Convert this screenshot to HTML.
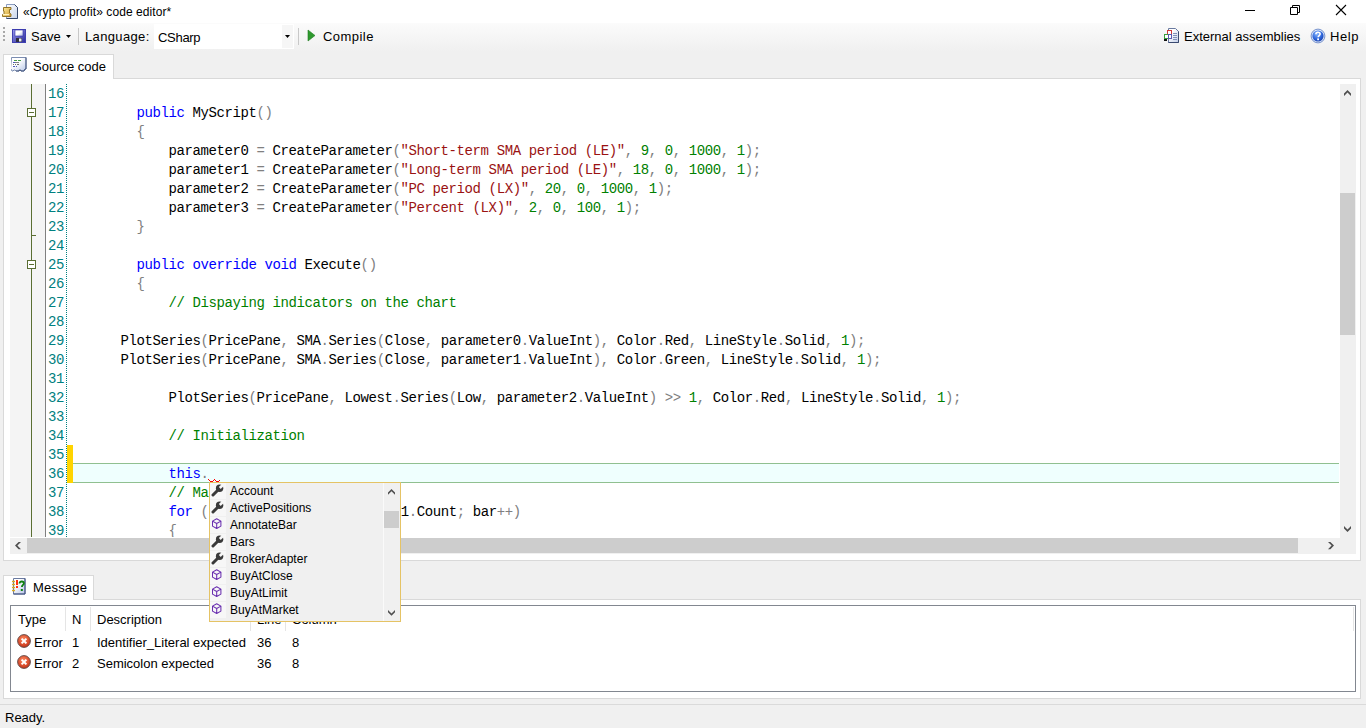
<!DOCTYPE html>
<html><head><meta charset="utf-8">
<style>
*{margin:0;padding:0;box-sizing:border-box}
html,body{width:1366px;height:728px;overflow:hidden;background:#f0f0f0;font-family:"Liberation Sans",sans-serif;font-size:13px;color:#000;position:relative}
.a{position:absolute}
.t{position:absolute;white-space:pre;line-height:16px}
#title{left:0;top:0;width:1366px;height:23px;background:#fff}
#tb{left:0;top:23px;width:1366px;height:28px;background:linear-gradient(#fbfbfb,#f0f0f0)}
.sep{position:absolute;width:1px;background:#c8c8c8}
#tab1{left:3px;top:54px;width:111px;height:25px;background:#fff;border:1px solid #d9d9d9;border-bottom:none}
#panel1{left:3px;top:78px;width:1358px;height:483px;background:#fff;border:1px solid #d9d9d9}
#gut{left:10px;top:84px;width:35px;height:453px;background:#f4f4f4}
#gsep{left:45px;top:84px;width:1px;height:453px;background:#808080}
#dots{left:66px;top:84px;width:1px;height:453px;background:repeating-linear-gradient(#008080 0 1px,transparent 1px 2px)}
#fold{left:31px;top:84px;width:1px;height:453px;background:#5a6e32}
.fbox{position:absolute;left:27px;width:9px;height:9px;background:#fff;border:1px solid #5a6e32}
.fbox::after{content:"";position:absolute;left:1px;top:3px;width:5px;height:1px;background:#5a6e32}
#code{left:10px;top:84px;width:1330px;height:453px;overflow:hidden}
#nums{left:26px;top:0;width:28px;text-align:right}
#lines{left:62.5px;top:0}
.nm,.ln{height:19px;line-height:19px;font-family:"Liberation Mono",monospace;font-size:14px;letter-spacing:-0.4px;white-space:pre;padding-top:1px}
.nm{color:#008080}
b{font-weight:normal}
.k{color:#0000ff}.s{color:#9a1212}.n{color:#008000}.c{color:#008000}.p{color:#808080}
#hl{left:63px;top:379px;width:1266px;height:20px;background:#effffe;border-top:1px solid #90c090;border-bottom:1px solid #90c090}
#ymark{left:57px;top:361px;width:6px;height:38px;background:#ffd400}
#vsb{left:1340px;top:84px;width:16px;height:454px;background:#f0f0f0}
#vthumb{left:1340px;top:193px;width:15px;height:142px;background:#cdcdcd}
#hsb{left:10px;top:538px;width:1346px;height:16px;background:#f0f0f0}
#hthumb{left:27px;top:538px;width:1271px;height:15px;background:#cdcdcd}
#tab2{left:3px;top:575px;width:91px;height:25px;background:#fff;border:1px solid #d9d9d9;border-bottom:none}
#panel2{left:3px;top:599px;width:1358px;height:100px;background:#fff;border:1px solid #d9d9d9}
#list{left:10px;top:605px;width:1346px;height:87px;background:#fff;border:1px solid #828790}
.csep{position:absolute;top:607px;width:1px;height:24px;background:#e5e5e5}
#status{left:0;top:704px;width:1366px;height:24px;background:#f0f0f0;border-top:1px solid #dadada}
#pop{left:209px;top:482px;width:192px;height:140px;background:#f0f0f0;border:1px solid #e5c365}
.pi{position:absolute;left:20px;height:17px;line-height:17px;white-space:pre;font-size:12px}
</style></head><body>
<div id="title" class="a"></div>
<!-- title icon -->
<svg class="a" style="left:0;top:2px" width="22" height="20" viewBox="0 0 22 20">
 <defs><linearGradient id="dg" x1="0" y1="0" x2="1" y2="1"><stop offset="0" stop-color="#ffffff"/><stop offset="1" stop-color="#c8d4ea"/></linearGradient>
 <linearGradient id="gg" x1="0" y1="0" x2="1" y2="1"><stop offset="0" stop-color="#fff0a0"/><stop offset="1" stop-color="#d09a30"/></linearGradient></defs>
 <path d="M6.5 2.5h8l3 3v11h-11z" fill="url(#dg)" stroke="#8a9cc0"/>
 <path d="M14.5 2.5l3 3v11h-11" fill="none" stroke="#34466a"/>
 <path d="M3.5 5.5h7.5v2h-1.5v3.5l1.5 1v2.5h-8.5v-2h1.5v-3.5h-0.5z" fill="url(#gg)" stroke="#8a6a18" stroke-width="0.9"/>
 <rect x="3" y="12" width="6" height="1.2" fill="#fff4c0"/>
</svg>
<div class="t" style="left:23px;top:4px;font-size:12px;letter-spacing:0.08px">«Crypto profit» code editor*</div>
<!-- window controls -->
<div class="a" style="left:1245px;top:10px;width:10px;height:1px;background:#000"></div>
<svg class="a" style="left:1289px;top:4px" width="12" height="12" viewBox="0 0 12 12"><path d="M1.5 3.5h7v7h-7z M3.5 3.5V1.5h7v7h-2" fill="none" stroke="#000" stroke-width="1"/></svg>
<svg class="a" style="left:1335px;top:4px" width="12" height="12" viewBox="0 0 12 12"><path d="M1 1L11 11M11 1L1 11" stroke="#000" stroke-width="1.1"/></svg>

<div id="tb" class="a"></div>
<!-- grip -->
<div class="a" style="left:3px;top:27px;width:2px;height:2px;background:#a8a8a8;box-shadow:0 4px #a8a8a8,0 8px #a8a8a8,0 12px #a8a8a8"></div>
<!-- save icon -->
<svg class="a" style="left:12px;top:29px" width="14" height="14" viewBox="0 0 14 14">
 <defs><linearGradient id="sg" x1="0" y1="0" x2="1" y2="1"><stop offset="0" stop-color="#9a9af0"/><stop offset="1" stop-color="#2a2a98"/></linearGradient>
 <linearGradient id="sl" x1="0" y1="0" x2="1" y2="1"><stop offset="0.5" stop-color="#ffffff"/><stop offset="1" stop-color="#b0b8e0"/></linearGradient></defs>
 <rect x="0.5" y="0.5" width="13" height="13" fill="url(#sg)" stroke="#4040b0"/>
 <rect x="3" y="1" width="8" height="6" fill="url(#sl)" stroke="#3030a8" stroke-width="0.6"/>
 <rect x="4" y="9" width="6" height="4" fill="#303040"/>
 <rect x="7" y="9.5" width="2.5" height="3" fill="#e8ecf8"/>
</svg>
<div class="t" style="left:31px;top:29px">Save</div>
<svg class="a" style="left:66px;top:35px" width="5" height="3"><path d="M0 0h5L2.5 3z" fill="#000"/></svg>
<div class="sep" style="left:78px;top:28px;height:17px"></div>
<div class="t" style="left:85px;top:29px;letter-spacing:0.35px">Language:</div>
<div class="a" style="left:154px;top:24px;width:140px;height:25px;background:#fff"></div>
<div class="a" style="left:282px;top:25px;width:11px;height:23px;background:#f6f6f6"></div>
<div class="t" style="left:158px;top:30px;letter-spacing:-0.3px">CSharp</div>
<svg class="a" style="left:285px;top:35px" width="5" height="3"><path d="M0 0h5L2.5 3z" fill="#000"/></svg>
<div class="sep" style="left:298px;top:28px;height:17px"></div>
<svg class="a" style="left:307px;top:29px" width="9" height="13"><path d="M1 1L8 6.5L1 12z" fill="#2e9a2e" stroke="#1f7a1f" stroke-width="0.6"/></svg>
<div class="t" style="left:323px;top:29px;letter-spacing:0.45px">Compile</div>
<!-- external assemblies icon -->
<svg class="a" style="left:1163px;top:28px" width="17" height="16" viewBox="0 0 17 16">
 <defs><linearGradient id="eag" x1="0" y1="0" x2="1" y2="1"><stop offset="0.3" stop-color="#ffffff"/><stop offset="1" stop-color="#c0cce8"/></linearGradient></defs>
 <path d="M5.5 0.5h7l3 3v11h-10z" fill="url(#eag)" stroke="#6a7aa0"/>
 <path d="M15.5 3.5v11h-10" fill="none" stroke="#3a4a70"/>
 <path d="M10 5.5h4M10 7.5h4M10 9.5h4M10 11.5h4" stroke="#8090b8"/>
 <rect x="4.5" y="2.5" width="4" height="4" fill="#fff" stroke="#d03a3a"/>
 <rect x="1.5" y="6.5" width="4" height="4" fill="#fff" stroke="#3aa03a"/>
 <rect x="5.5" y="6.5" width="3" height="4" fill="#fff" stroke="#5a5ab0"/>
 <rect x="1" y="11" width="3" height="2" fill="#101010"/>
</svg>
<div class="t" style="left:1184px;top:29px">External assemblies</div>
<svg class="a" style="left:1310px;top:28px" width="16" height="16" viewBox="0 0 16 16">
 <defs><radialGradient id="hg" cx="0.4" cy="0.3" r="0.8"><stop offset="0" stop-color="#8ab8ff"/><stop offset="0.6" stop-color="#2a62d8"/><stop offset="1" stop-color="#1a3aa0"/></radialGradient></defs>
 <circle cx="8" cy="8" r="6.9" fill="#dce8fa" stroke="#5a7ac0" stroke-width="0.8"/>
 <circle cx="8" cy="8" r="5.6" fill="url(#hg)"/>
 <path d="M5.9 6.3c0-1.4 1-2.1 2.1-2.1s2.1.7 2.1 1.9c0 1.5-1.9 1.5-1.9 3.2" fill="none" stroke="#fff" stroke-width="1.6"/>
 <rect x="7.2" y="10.4" width="1.8" height="1.8" fill="#fff"/>
</svg>
<div class="t" style="left:1330px;top:29px;letter-spacing:0.6px">Help</div>

<!-- Source code tab + panel -->
<div id="panel1" class="a"></div>
<div id="tab1" class="a"></div>
<svg class="a" style="left:11px;top:57px" width="16" height="15" viewBox="0 0 16 15">
 <defs><linearGradient id="sc" x1="0" y1="0" x2="1" y2="1"><stop offset="0.4" stop-color="#ffffff"/><stop offset="1" stop-color="#b8c8e8"/></linearGradient></defs>
 <path d="M0.5 0.5h14.5v11.5h-1l-1 2h-3l-0.5-1h-1l-0.5 1h-3l-1-1h-1l-1 1h-1l-1-2h-0.5z" fill="url(#sc)" stroke="#7a8cb0"/>
 <path d="M15 0.5v11.5h-1l-1 2h-3l-0.5-1h-1l-0.5 1h-3" fill="none" stroke="#44567e"/>
 <path d="M3 3.5h3M7 3.5h3" stroke="#46a046"/>
 <path d="M2 5.5h2" stroke="#4a5ab8"/><path d="M4 5.5h4" stroke="#808080"/>
 <path d="M2 7.5h1M4 7.5h1M6 7.5h2" stroke="#707070"/>
 <path d="M2 9.5h2M5 9.5h1" stroke="#4a5ab8"/>
</svg>
<div class="t" style="left:33px;top:59px">Source code</div>

<div id="gut" class="a"></div>
<div id="gsep" class="a"></div>
<div id="fold" class="a"></div>
<div class="fbox" style="top:108px"></div>
<div class="fbox" style="top:260px"></div>
<div class="a" style="left:31px;top:235px;width:5px;height:1px;background:#5a6e32"></div>
<div id="dots" class="a"></div>
<div id="code" class="a">
 <div id="hl" class="a"></div>
 <div id="ymark" class="a"></div>
 <div id="nums" class="a"><div class="nm">16</div><div class="nm">17</div><div class="nm">18</div><div class="nm">19</div><div class="nm">20</div><div class="nm">21</div><div class="nm">22</div><div class="nm">23</div><div class="nm">24</div><div class="nm">25</div><div class="nm">26</div><div class="nm">27</div><div class="nm">28</div><div class="nm">29</div><div class="nm">30</div><div class="nm">31</div><div class="nm">32</div><div class="nm">33</div><div class="nm">34</div><div class="nm">35</div><div class="nm">36</div><div class="nm">37</div><div class="nm">38</div><div class="nm">39</div></div>
 <div id="lines" class="a">
<div class="ln"></div>
<div class="ln">        <b class="k">public</b> MyScript<b class="p">(</b><b class="p">)</b></div>
<div class="ln">        <b class="p">{</b></div>
<div class="ln">            parameter0 <b class="p">=</b> CreateParameter<b class="p">(</b><b class="s">&quot;Short-term SMA period (LE)&quot;</b><b class="p">,</b> <b class="n">9</b><b class="p">,</b> <b class="n">0</b><b class="p">,</b> <b class="n">1000</b><b class="p">,</b> <b class="n">1</b><b class="p">)</b><b class="p">;</b></div>
<div class="ln">            parameter1 <b class="p">=</b> CreateParameter<b class="p">(</b><b class="s">&quot;Long-term SMA period (LE)&quot;</b><b class="p">,</b> <b class="n">18</b><b class="p">,</b> <b class="n">0</b><b class="p">,</b> <b class="n">1000</b><b class="p">,</b> <b class="n">1</b><b class="p">)</b><b class="p">;</b></div>
<div class="ln">            parameter2 <b class="p">=</b> CreateParameter<b class="p">(</b><b class="s">&quot;PC period (LX)&quot;</b><b class="p">,</b> <b class="n">20</b><b class="p">,</b> <b class="n">0</b><b class="p">,</b> <b class="n">1000</b><b class="p">,</b> <b class="n">1</b><b class="p">)</b><b class="p">;</b></div>
<div class="ln">            parameter3 <b class="p">=</b> CreateParameter<b class="p">(</b><b class="s">&quot;Percent (LX)&quot;</b><b class="p">,</b> <b class="n">2</b><b class="p">,</b> <b class="n">0</b><b class="p">,</b> <b class="n">100</b><b class="p">,</b> <b class="n">1</b><b class="p">)</b><b class="p">;</b></div>
<div class="ln">        <b class="p">}</b></div>
<div class="ln"></div>
<div class="ln">        <b class="k">public</b> <b class="k">override</b> <b class="k">void</b> Execute<b class="p">(</b><b class="p">)</b></div>
<div class="ln">        <b class="p">{</b></div>
<div class="ln">            <b class="c">// Dispaying indicators on the chart</b></div>
<div class="ln"></div>
<div class="ln">      PlotSeries<b class="p">(</b>PricePane<b class="p">,</b> SMA<b class="p">.</b>Series<b class="p">(</b>Close<b class="p">,</b> parameter0<b class="p">.</b>ValueInt<b class="p">)</b><b class="p">,</b> Color<b class="p">.</b>Red<b class="p">,</b> LineStyle<b class="p">.</b>Solid<b class="p">,</b> <b class="n">1</b><b class="p">)</b><b class="p">;</b></div>
<div class="ln">      PlotSeries<b class="p">(</b>PricePane<b class="p">,</b> SMA<b class="p">.</b>Series<b class="p">(</b>Close<b class="p">,</b> parameter1<b class="p">.</b>ValueInt<b class="p">)</b><b class="p">,</b> Color<b class="p">.</b>Green<b class="p">,</b> LineStyle<b class="p">.</b>Solid<b class="p">,</b> <b class="n">1</b><b class="p">)</b><b class="p">;</b></div>
<div class="ln"></div>
<div class="ln">            PlotSeries<b class="p">(</b>PricePane<b class="p">,</b> Lowest<b class="p">.</b>Series<b class="p">(</b>Low<b class="p">,</b> parameter2<b class="p">.</b>ValueInt<b class="p">)</b> <b class="p">&gt;</b><b class="p">&gt;</b> <b class="n">1</b><b class="p">,</b> Color<b class="p">.</b>Red<b class="p">,</b> LineStyle<b class="p">.</b>Solid<b class="p">,</b> <b class="n">1</b><b class="p">)</b><b class="p">;</b></div>
<div class="ln"></div>
<div class="ln">            <b class="c">// Initialization</b></div>
<div class="ln"></div>
<div class="ln">            <b class="k">this</b><b class="p">.</b></div>
<div class="ln">            <b class="c">// Main loop</b></div>
<div class="ln">            <b class="k">for</b> <b class="p">(</b><b class="k">int</b> bar <b class="p">=</b> <b class="n">20</b><b class="p">;</b> bar <b class="p">&lt;</b> Bars1<b class="p">.</b>Count<b class="p">;</b> bar<b class="p">+</b><b class="p">+</b><b class="p">)</b></div>
<div class="ln">            <b class="p">{</b></div>
 </div>
</div>
<!-- squiggle -->
<div class="a" style="left:208px;top:479px;width:1px;height:1px;background:#f00"></div><div class="a" style="left:209px;top:480px;width:1px;height:1px;background:#f00"></div><div class="a" style="left:210px;top:481px;width:1px;height:1px;background:#f00"></div><div class="a" style="left:211px;top:481px;width:1px;height:1px;background:#f00"></div><div class="a" style="left:212px;top:481px;width:1px;height:1px;background:#f00"></div><div class="a" style="left:213px;top:480px;width:1px;height:1px;background:#f00"></div><div class="a" style="left:214px;top:479px;width:1px;height:1px;background:#f00"></div><div class="a" style="left:215px;top:480px;width:1px;height:1px;background:#f00"></div><div class="a" style="left:216px;top:481px;width:1px;height:1px;background:#f00"></div><div class="a" style="left:217px;top:481px;width:1px;height:1px;background:#f00"></div><div class="a" style="left:218px;top:481px;width:1px;height:1px;background:#f00"></div><div class="a" style="left:219px;top:480px;width:1px;height:1px;background:#f00"></div>
<div id="vsb" class="a"></div>
<div id="vthumb" class="a"></div>


<div id="hsb" class="a"></div>
<div id="hthumb" class="a"></div>
<svg class="a" style="left:1344px;top:90px" width="7" height="7"><path d="M0 3.5L3.5 0L7 3.5V6L3.5 2.5L0 6z" fill="#505050"/></svg>
<svg class="a" style="left:1344px;top:526px" width="7" height="7"><path d="M0 0L3.5 3.5L7 0V2.5L3.5 6L0 2.5z" fill="#505050"/></svg>
<svg class="a" style="left:15px;top:542px" width="7" height="8"><path d="M0 3.6L3.6 0H6L2.4 3.6L6 7.2H3.6z" fill="#505050"/></svg>
<svg class="a" style="left:1328px;top:542px" width="7" height="8"><path d="M6 3.6L2.4 0H0L3.6 3.6L0 7.2H2.4z" fill="#505050"/></svg>



<!-- Message tab + panel -->
<div id="panel2" class="a"></div>
<div id="tab2" class="a"></div>
<svg class="a" style="left:11px;top:577px" width="16" height="18" viewBox="0 0 16 18">
 <defs><linearGradient id="mg" x1="0" y1="0" x2="1" y2="1"><stop offset="0.3" stop-color="#ffffff"/><stop offset="1" stop-color="#b8c4e8"/></linearGradient></defs>
 <path d="M2.5 1.5h11.5v15.5h-11.5z" fill="url(#mg)" stroke="#6a7aa0"/>
 <path d="M14 1.5v15.5h-11.5" fill="none" stroke="#3e5080"/>
 <path d="M1 4.5h3M1 7.5h3M1 10.5h3M1 13.5h3" stroke="#d8a820" stroke-width="1.6"/>
 <rect x="5" y="3" width="2" height="5" fill="#ff3010"/><rect x="5" y="9" width="2" height="2" fill="#ff3010"/>
 <path d="M8.5 6.5c0-1.4 1-2 2.2-2s2.2.6 2.2 1.8c0 1.6-2 1.6-2 3.6" fill="none" stroke="#108010" stroke-width="1.8"/><rect x="9.8" y="12" width="2" height="2" fill="#108010"/>
</svg>
<div class="t" style="left:33px;top:580px;letter-spacing:0.2px">Message</div>
<div id="list" class="a"></div>
<div class="csep" style="left:65px"></div>
<div class="csep" style="left:90px"></div>
<div class="csep" style="left:250px"></div>
<div class="csep" style="left:285px"></div>
<div class="csep" style="left:1353px"></div>
<div class="t" style="left:18px;top:612px">Type</div>
<div class="t" style="left:72px;top:612px">N</div>
<div class="t" style="left:97px;top:612px">Description</div>
<div class="t" style="left:257px;top:612px">Line</div>
<div class="t" style="left:292px;top:612px">Column</div>
<svg class="a" style="left:17px;top:634px" width="14" height="14" viewBox="0 0 14 14"><defs><radialGradient id="eg1" cx="0.45" cy="0.35" r="0.7"><stop offset="0" stop-color="#ff8a60"/><stop offset="1" stop-color="#c02a10"/></radialGradient></defs><circle cx="7" cy="7" r="6.4" fill="url(#eg1)" stroke="#5a4a48" stroke-width="0.9"/><path d="M4.6 4.6l4.8 4.8M9.4 4.6l-4.8 4.8" stroke="#fff" stroke-width="2"/></svg>
<div class="t" style="left:34px;top:635px">Error</div>
<div class="t" style="left:72px;top:635px">1</div>
<div class="t" style="left:97px;top:635px">Identifier_Literal expected</div>
<div class="t" style="left:257px;top:635px">36</div>
<div class="t" style="left:292px;top:635px">8</div>
<svg class="a" style="left:17px;top:655px" width="14" height="14" viewBox="0 0 14 14"><defs><radialGradient id="eg2" cx="0.45" cy="0.35" r="0.7"><stop offset="0" stop-color="#ff8a60"/><stop offset="1" stop-color="#c02a10"/></radialGradient></defs><circle cx="7" cy="7" r="6.4" fill="url(#eg2)" stroke="#5a4a48" stroke-width="0.9"/><path d="M4.6 4.6l4.8 4.8M9.4 4.6l-4.8 4.8" stroke="#fff" stroke-width="2"/></svg>
<div class="t" style="left:34px;top:656px">Error</div>
<div class="t" style="left:72px;top:656px">2</div>
<div class="t" style="left:97px;top:656px">Semicolon expected</div>
<div class="t" style="left:257px;top:656px">36</div>
<div class="t" style="left:292px;top:656px">8</div>

<div id="status" class="a"></div>
<div class="t" style="left:5px;top:710px">Ready.</div>

<!-- autocomplete popup -->
<div id="pop" class="a">
 <div class="a" style="left:0;top:0px;width:16px;height:16px;background:#f7f7f7"></div>
 <svg class="a" style="left:1px;top:1px" width="13" height="13" viewBox="0 0 13 13"><path d="M2 11L6.5 6.5" stroke="#3a3a3a" stroke-width="3" stroke-linecap="round"/><circle cx="8.6" cy="4.2" r="3.7" fill="#3a3a3a"/><path d="M7.9 3.1L9.7 4.9L13.1 1.6L11.2 -0.3z" fill="#f7f7f7"/></svg>
 <div class="pi" style="top:0px">Account</div>
 <div class="a" style="left:0;top:17px;width:16px;height:16px;background:#f7f7f7"></div>
 <svg class="a" style="left:1px;top:18px" width="13" height="13" viewBox="0 0 13 13"><path d="M2 11L6.5 6.5" stroke="#3a3a3a" stroke-width="3" stroke-linecap="round"/><circle cx="8.6" cy="4.2" r="3.7" fill="#3a3a3a"/><path d="M7.9 3.1L9.7 4.9L13.1 1.6L11.2 -0.3z" fill="#f7f7f7"/></svg>
 <div class="pi" style="top:17px">ActivePositions</div>
 <div class="a" style="left:0;top:34px;width:16px;height:16px;background:#f7f7f7"></div>
 <svg class="a" style="left:2px;top:35px" width="11" height="12" viewBox="0 0 11 12"><path d="M4.7 0.7L8.9 3.1V8.1L4.7 10.5L0.5 8.1V3.1z M0.5 3.1L4.7 5.5L8.9 3.1 M4.7 5.5V10.5" fill="none" stroke="#6a30b0" stroke-width="1.05" stroke-linejoin="round"/></svg>
 <div class="pi" style="top:34px">AnnotateBar</div>
 <div class="a" style="left:0;top:51px;width:16px;height:16px;background:#f7f7f7"></div>
 <svg class="a" style="left:1px;top:52px" width="13" height="13" viewBox="0 0 13 13"><path d="M2 11L6.5 6.5" stroke="#3a3a3a" stroke-width="3" stroke-linecap="round"/><circle cx="8.6" cy="4.2" r="3.7" fill="#3a3a3a"/><path d="M7.9 3.1L9.7 4.9L13.1 1.6L11.2 -0.3z" fill="#f7f7f7"/></svg>
 <div class="pi" style="top:51px">Bars</div>
 <div class="a" style="left:0;top:68px;width:16px;height:16px;background:#f7f7f7"></div>
 <svg class="a" style="left:1px;top:69px" width="13" height="13" viewBox="0 0 13 13"><path d="M2 11L6.5 6.5" stroke="#3a3a3a" stroke-width="3" stroke-linecap="round"/><circle cx="8.6" cy="4.2" r="3.7" fill="#3a3a3a"/><path d="M7.9 3.1L9.7 4.9L13.1 1.6L11.2 -0.3z" fill="#f7f7f7"/></svg>
 <div class="pi" style="top:68px">BrokerAdapter</div>
 <div class="a" style="left:0;top:85px;width:16px;height:16px;background:#f7f7f7"></div>
 <svg class="a" style="left:2px;top:86px" width="11" height="12" viewBox="0 0 11 12"><path d="M4.7 0.7L8.9 3.1V8.1L4.7 10.5L0.5 8.1V3.1z M0.5 3.1L4.7 5.5L8.9 3.1 M4.7 5.5V10.5" fill="none" stroke="#6a30b0" stroke-width="1.05" stroke-linejoin="round"/></svg>
 <div class="pi" style="top:85px">BuyAtClose</div>
 <div class="a" style="left:0;top:102px;width:16px;height:16px;background:#f7f7f7"></div>
 <svg class="a" style="left:2px;top:103px" width="11" height="12" viewBox="0 0 11 12"><path d="M4.7 0.7L8.9 3.1V8.1L4.7 10.5L0.5 8.1V3.1z M0.5 3.1L4.7 5.5L8.9 3.1 M4.7 5.5V10.5" fill="none" stroke="#6a30b0" stroke-width="1.05" stroke-linejoin="round"/></svg>
 <div class="pi" style="top:102px">BuyAtLimit</div>
 <div class="a" style="left:0;top:119px;width:16px;height:16px;background:#f7f7f7"></div>
 <svg class="a" style="left:2px;top:120px" width="11" height="12" viewBox="0 0 11 12"><path d="M4.7 0.7L8.9 3.1V8.1L4.7 10.5L0.5 8.1V3.1z M0.5 3.1L4.7 5.5L8.9 3.1 M4.7 5.5V10.5" fill="none" stroke="#6a30b0" stroke-width="1.05" stroke-linejoin="round"/></svg>
 <div class="pi" style="top:119px">BuyAtMarket</div>
 <div class="a" style="left:173px;top:0;width:1px;height:138px;background:#fafafa"></div>
 <div class="a" style="left:174px;top:0;width:16px;height:138px;background:#f0f0f0"></div>
 <div class="a" style="left:174px;top:28px;width:15px;height:17px;background:#cdcdcd"></div>
 <svg class="a" style="left:178px;top:6px" width="8" height="6"><path d="M0 3.5L3.5 0L7 3.5V5.8L3.5 2.3L0 5.8z" fill="#505050"/></svg>
 <svg class="a" style="left:178px;top:127px" width="8" height="6"><path d="M0 0L3.5 3.5L7 0V2.3L3.5 5.8L0 2.3z" fill="#505050"/></svg>
</div>
</body></html>
